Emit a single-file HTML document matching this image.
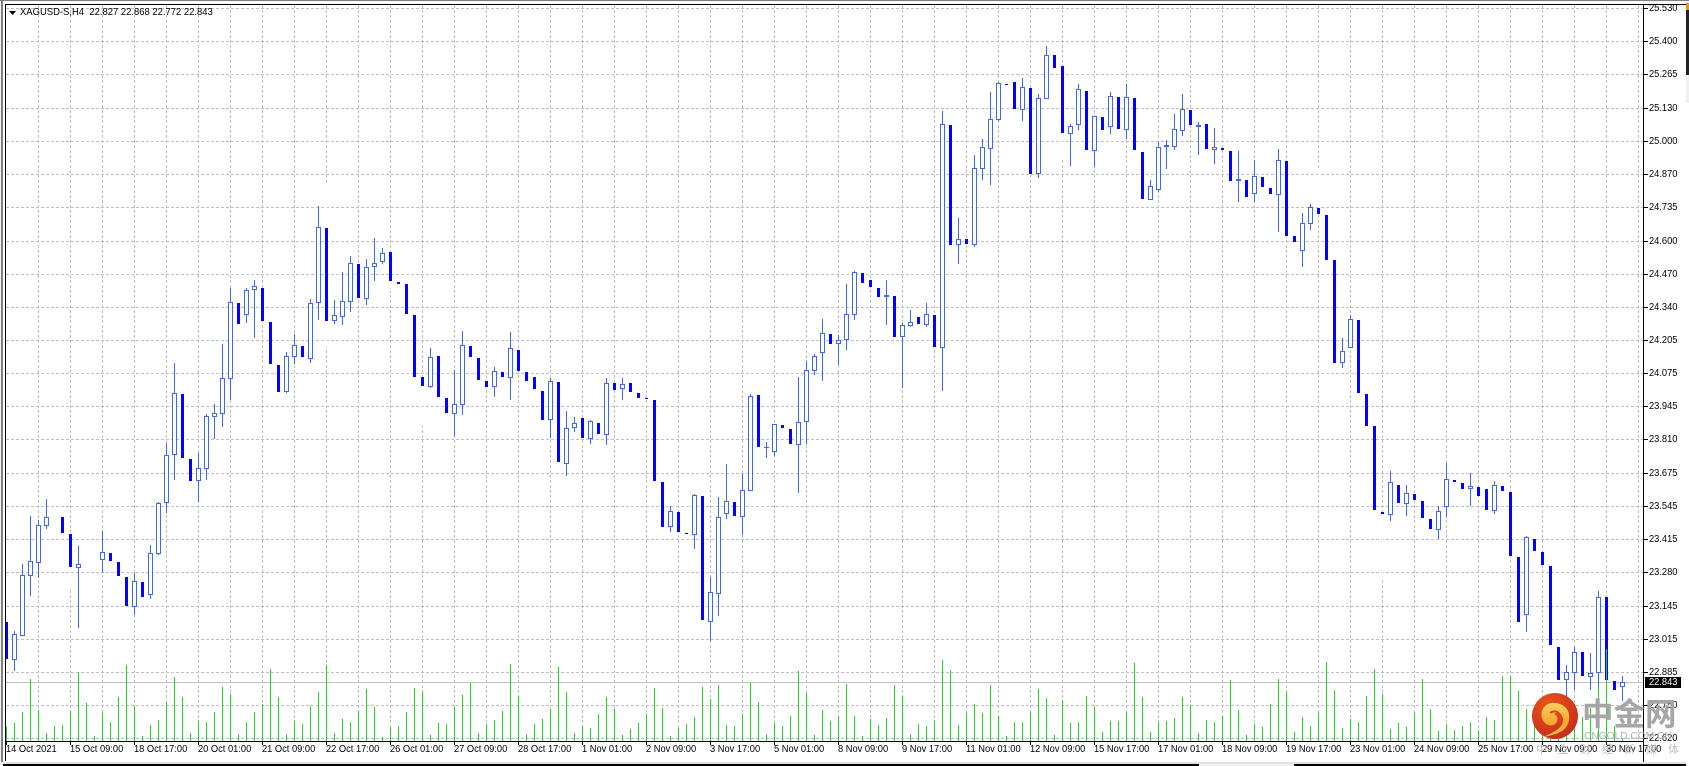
<!DOCTYPE html>
<html><head><meta charset="utf-8"><title>XAGUSD-S,H4</title>
<style>
html,body{margin:0;padding:0;background:#f0f0f0}
#w{position:relative;width:1689px;height:766px;overflow:hidden;background:#f0f0f0;font-family:"Liberation Sans",sans-serif;color:#000}
svg{position:absolute;left:0;top:0}
.d,.p,.h{position:absolute;font-size:10px;line-height:10px;white-space:pre;transform:scaleX(.93);transform-origin:0 0}
.d{top:745px}
.p{left:1649px}
.h{left:20px;top:8px;transform:scaleX(.945)}
</style></head><body><div id="w">
<svg width="1689" height="766" viewBox="0 0 1689 766" shape-rendering="crispEdges">
<defs><clipPath id="c"><rect x="6" y="5" width="1637" height="736"/></clipPath></defs>
<rect x="0" y="0" width="1689" height="1" fill="#808080"/>
<rect x="1" y="0" width="2" height="762" fill="#808080"/>
<rect x="3" y="1" width="1683" height="761" fill="#fff"/>
<rect x="3" y="762" width="1683" height="2" fill="#e0e0e0"/>
<rect x="3" y="764" width="1196" height="2" fill="#000"/>
<rect x="1294" y="764" width="395" height="2" fill="#000"/>
<rect x="1686" y="3" width="3" height="72" fill="#222"/>
<rect x="1686" y="3" width="3" height="7" fill="#d99a2b"/>
<rect x="1686" y="103" width="3" height="663" fill="#fff"/>
<rect x="5" y="4" width="1681" height="1" fill="#000"/>
<rect x="5" y="4" width="1" height="757" fill="#000"/>
<path fill="none" stroke="#c0c0c0" stroke-dasharray="3 2" d="M6 8.5H1643M6 41.5H1643M6 74.5H1643M6 108.5H1643M6 141.5H1643M6 174.5H1643M6 207.5H1643M6 241.5H1643M6 274.5H1643M6 307.5H1643M6 340.5H1643M6 373.5H1643M6 406.5H1643M6 439.5H1643M6 473.5H1643M6 506.5H1643M6 539.5H1643M6 572.5H1643M6 606.5H1643M6 639.5H1643M6 672.5H1643M6 705.5H1643M6 738.5H1643M38.5 5V741M70.5 5V741M102.5 5V741M134.5 5V741M166.5 5V741M198.5 5V741M230.5 5V741M262.5 5V741M294.5 5V741M326.5 5V741M358.5 5V741M390.5 5V741M422.5 5V741M454.5 5V741M486.5 5V741M518.5 5V741M550.5 5V741M582.5 5V741M614.5 5V741M646.5 5V741M678.5 5V741M710.5 5V741M742.5 5V741M774.5 5V741M806.5 5V741M838.5 5V741M870.5 5V741M902.5 5V741M934.5 5V741M966.5 5V741M998.5 5V741M1030.5 5V741M1062.5 5V741M1094.5 5V741M1126.5 5V741M1158.5 5V741M1190.5 5V741M1222.5 5V741M1254.5 5V741M1286.5 5V741M1318.5 5V741M1350.5 5V741M1382.5 5V741M1414.5 5V741M1446.5 5V741M1478.5 5V741M1510.5 5V741M1542.5 5V741M1574.5 5V741M1606.5 5V741M1638.5 5V741"/>
<path fill="none" stroke="#fff" d="M326.5 185V228M326.5 321V347M1062.5 133V160M1318.5 169V208M1382.5 514V579M70.5 567V588M422.5 386V426M390.5 281V291"/>
<rect x="6" y="682" width="1637" height="1" fill="#c0c0c0"/>
<g clip-path="url(#c)">
<path fill="none" stroke="#4169e1" d="M14.5 631V671M22.5 564V636M30.5 516V596M38.5 520V578M46.5 499V529M78.5 546V628M102.5 531V573M134.5 573V615M150.5 545V599M158.5 502V555M166.5 443V513M174.5 363V480M198.5 453V502M206.5 414V480M214.5 404V439M222.5 344V427M230.5 288V400M246.5 288V323M254.5 280V338M286.5 352V393M294.5 334V364M310.5 299V363M318.5 206V320M334.5 300V324M342.5 272V325M350.5 256V312M366.5 259V305M374.5 238V281M382.5 248V264M430.5 348V388M454.5 370V436M462.5 331V415M494.5 367V397M510.5 332V400M550.5 378V438M566.5 411V476M574.5 417V432M590.5 420V444M606.5 378V445M622.5 378V400M670.5 506V532M694.5 494V549M710.5 577V641M718.5 497V616M726.5 464V519M742.5 474V535M750.5 394V491M766.5 442V458M764 447.5H769M774.5 424V456M798.5 377V493M806.5 361V444M814.5 354V375M822.5 319V381M838.5 335V365M846.5 284V350M854.5 271V320M886.5 280V325M902.5 323V388M910.5 310V327M926.5 303V327M942.5 111V391M958.5 218V264M974.5 155V247M982.5 139V180M990.5 92V185M998.5 82V121M1022.5 78V121M1038.5 94V178M1046.5 46V99M1070.5 124V166M1078.5 84V130M1094.5 116V167M1110.5 92V134M1126.5 84V139M1150.5 180V200M1158.5 142V192M1166.5 140V169M1174.5 114V150M1182.5 94V136M1198.5 122V155M1214.5 128V164M1238.5 151V202M1254.5 160V202M1278.5 149V232M1302.5 213V267M1310.5 204V230M1342.5 338V368M1350.5 315V348M1390.5 471V521M1406.5 485V516M1438.5 506V539M1446.5 463V517M1470.5 473V506M1494.5 481V514M1526.5 536V632M1566.5 665V698M1574.5 647V690M1590.5 653V690M1598.5 591V698M1622.5 676V701"/>
<path fill="#fff" stroke="#4169e1" d="M12.5 634.5h4V659.5h-4zM20.5 575.5h4V635.5h-4zM28.5 561.5h4V575.5h-4zM36.5 525.5h4V562.5h-4zM44.5 517.5h4V525.5h-4zM76.5 564.5h4V567.5h-4zM100.5 552.5h4V559.5h-4zM132.5 581.5h4V606.5h-4zM148.5 553.5h4V594.5h-4zM156.5 503.5h4V553.5h-4zM164.5 455.5h4V502.5h-4zM172.5 393.5h4V454.5h-4zM196.5 468.5h4V480.5h-4zM204.5 416.5h4V468.5h-4zM212.5 413.5h4V416.5h-4zM220.5 378.5h4V413.5h-4zM228.5 302.5h4V378.5h-4zM244.5 290.5h4V314.5h-4zM252.5 286.5h4V289.5h-4zM284.5 356.5h4V391.5h-4zM292.5 345.5h4V356.5h-4zM308.5 303.5h4V358.5h-4zM316.5 227.5h4V302.5h-4zM332.5 315.5h4V320.5h-4zM340.5 301.5h4V316.5h-4zM348.5 263.5h4V301.5h-4zM364.5 267.5h4V298.5h-4zM372.5 263.5h4V266.5h-4zM380.5 253.5h4V261.5h-4zM428.5 357.5h4V386.5h-4zM452.5 404.5h4V413.5h-4zM460.5 345.5h4V404.5h-4zM492.5 371.5h4V386.5h-4zM508.5 348.5h4V377.5h-4zM548.5 381.5h4V419.5h-4zM564.5 428.5h4V463.5h-4zM572.5 423.5h4V427.5h-4zM588.5 421.5h4V438.5h-4zM604.5 383.5h4V434.5h-4zM620.5 384.5h4V388.5h-4zM668.5 511.5h4V526.5h-4zM692.5 495.5h4V534.5h-4zM708.5 592.5h4V621.5h-4zM716.5 517.5h4V593.5h-4zM724.5 501.5h4V513.5h-4zM740.5 490.5h4V516.5h-4zM748.5 396.5h4V490.5h-4zM772.5 424.5h4V451.5h-4zM796.5 422.5h4V444.5h-4zM804.5 370.5h4V421.5h-4zM812.5 356.5h4V370.5h-4zM820.5 333.5h4V352.5h-4zM836.5 340.5h4V343.5h-4zM844.5 314.5h4V339.5h-4zM852.5 272.5h4V314.5h-4zM884.5 295.5h4V296.5h-4zM900.5 325.5h4V336.5h-4zM908.5 322.5h4V325.5h-4zM924.5 314.5h4V324.5h-4zM940.5 124.5h4V347.5h-4zM956.5 239.5h4V244.5h-4zM972.5 168.5h4V244.5h-4zM980.5 147.5h4V168.5h-4zM988.5 119.5h4V148.5h-4zM996.5 83.5h4V119.5h-4zM1020.5 87.5h4V109.5h-4zM1036.5 98.5h4V173.5h-4zM1044.5 55.5h4V98.5h-4zM1068.5 126.5h4V133.5h-4zM1076.5 89.5h4V124.5h-4zM1092.5 116.5h4V150.5h-4zM1108.5 96.5h4V126.5h-4zM1124.5 97.5h4V129.5h-4zM1148.5 186.5h4V199.5h-4zM1156.5 147.5h4V189.5h-4zM1164.5 145.5h4V146.5h-4zM1172.5 129.5h4V146.5h-4zM1180.5 109.5h4V130.5h-4zM1196.5 125.5h4V126.5h-4zM1212.5 147.5h4V149.5h-4zM1236.5 179.5h4V180.5h-4zM1252.5 176.5h4V193.5h-4zM1276.5 160.5h4V194.5h-4zM1300.5 223.5h4V250.5h-4zM1308.5 207.5h4V223.5h-4zM1340.5 351.5h4V362.5h-4zM1348.5 319.5h4V347.5h-4zM1388.5 482.5h4V514.5h-4zM1404.5 493.5h4V503.5h-4zM1436.5 511.5h4V529.5h-4zM1444.5 479.5h4V506.5h-4zM1468.5 486.5h4V488.5h-4zM1492.5 485.5h4V510.5h-4zM1524.5 537.5h4V614.5h-4zM1564.5 672.5h4V679.5h-4zM1572.5 652.5h4V672.5h-4zM1588.5 673.5h4V676.5h-4zM1596.5 597.5h4V672.5h-4zM1620.5 682.5h4V686.5h-4z"/>
<path fill="none" stroke="#0000ff" stroke-width="3" d="M6.5 622V659M62.5 517V533M70.5 534V567M110.5 553V561M118.5 562V576M126.5 577V606M142.5 582V597M182.5 394V458M190.5 459V481M238.5 303V324M262.5 288V321M270.5 322V364M278.5 365V392M302.5 346V357M326.5 228V321M358.5 264V298M390.5 252V281M398.5 282V284M406.5 284V314M414.5 315V377M422.5 377V386M438.5 356V397M446.5 398V413M470.5 346V357M478.5 358V380M486.5 381V387M502.5 372V377M518.5 350V371M526.5 372V381M534.5 377V389M542.5 391V420M558.5 382V462M582.5 418V438M598.5 423V434M614.5 383V390M630.5 383V392M638.5 393V398M646.5 398V399M654.5 400V481M662.5 482V527M678.5 512V532M686.5 533V534M702.5 496V620M734.5 502V516M758.5 395V447M782.5 425V428M790.5 429V444M830.5 334V344M862.5 273V283M870.5 280V287M878.5 288V297M894.5 296V337M918.5 317V324M934.5 315V347M950.5 125V245M966.5 239V244M1006.5 84V85M1014.5 82V109M1030.5 88V174M1054.5 55V68M1062.5 66V133M1086.5 91V150M1102.5 117V130M1118.5 97V129M1134.5 98V150M1142.5 152V199M1190.5 110V125M1206.5 124V149M1222.5 148V150M1230.5 151V181M1246.5 180V197M1262.5 177V187M1270.5 188V194M1286.5 161V236M1294.5 236V242M1318.5 208V214M1326.5 215V260M1334.5 260V363M1358.5 320V393M1366.5 394V426M1374.5 426V510M1382.5 512V514M1398.5 485V503M1414.5 494V500M1422.5 501V518M1430.5 519V529M1454.5 480V482M1462.5 483V489M1478.5 487V496M1486.5 489V510M1502.5 486V491M1510.5 492V556M1518.5 557V622M1534.5 539V551M1542.5 552V565M1550.5 566V645M1558.5 647V680M1582.5 652V676M1606.5 597V680M1614.5 681V690"/>
<path fill="none" stroke="#32cd32" d="M6.5 727V741M14.5 723V741M22.5 712V741M30.5 679V741M38.5 710V741M46.5 733V741M54.5 726V741M62.5 725V741M70.5 711V741M78.5 672V741M86.5 703V741M94.5 736V741M102.5 713V741M110.5 722V741M118.5 697V741M126.5 665V741M134.5 706V741M142.5 736V741M150.5 725V741M158.5 720V741M166.5 702V741M174.5 677V741M182.5 697V741M190.5 733V741M198.5 721V741M206.5 722V741M214.5 712V741M222.5 687V741M230.5 694V741M238.5 734V741M246.5 722V741M254.5 712V741M262.5 704V741M270.5 669V741M278.5 697V741M286.5 734V741M294.5 721V741M302.5 724V741M310.5 706V741M318.5 692V741M326.5 665V741M334.5 733V741M342.5 719V741M350.5 722V741M358.5 711V741M366.5 689V741M374.5 707V741M382.5 737V741M390.5 727V741M398.5 726V741M406.5 712V741M414.5 688V741M422.5 692V741M430.5 735V741M438.5 723V741M446.5 724V741M454.5 707V741M462.5 695V741M470.5 683V741M478.5 733V741M486.5 724V741M494.5 720V741M502.5 711V741M510.5 664V741M518.5 696V741M526.5 734V741M534.5 724V741M542.5 719V741M550.5 709V741M558.5 667V741M566.5 692V741M574.5 733V741M582.5 726V741M590.5 728V741M598.5 714V741M606.5 697V741M614.5 709V741M622.5 735V741M630.5 729V741M638.5 723V741M646.5 714V741M654.5 688V741M662.5 708V741M670.5 736V741M678.5 728V741M686.5 724V741M694.5 717V741M702.5 687V741M710.5 699V741M718.5 685V741M726.5 725V741M734.5 726V741M742.5 714V741M750.5 683V741M758.5 702V741M766.5 734V741M774.5 723V741M782.5 726V741M790.5 716V741M798.5 671V741M806.5 693V741M814.5 735V741M822.5 710V741M830.5 721V741M838.5 717V741M846.5 684V741M854.5 716V741M862.5 736V741M870.5 719V741M878.5 725V741M886.5 718V741M894.5 685V741M902.5 696V741M910.5 734V741M918.5 724V741M926.5 726V741M934.5 721V741M942.5 660V741M950.5 670V741M958.5 725V741M966.5 713V741M974.5 704V741M982.5 713V741M990.5 685V741M998.5 716V741M1006.5 736V741M1014.5 722V741M1022.5 722V741M1030.5 712V741M1038.5 689V741M1046.5 698V741M1054.5 735V741M1062.5 700V741M1070.5 723V741M1078.5 722V741M1086.5 696V741M1094.5 707V741M1102.5 732V741M1110.5 721V741M1118.5 721V741M1126.5 712V741M1134.5 663V741M1142.5 697V741M1150.5 732V741M1158.5 722V741M1166.5 721V741M1174.5 718V741M1182.5 697V741M1190.5 705V741M1198.5 733V741M1206.5 720V741M1214.5 722V741M1222.5 716V741M1230.5 680V741M1238.5 710V741M1246.5 735V741M1254.5 724V741M1262.5 727V741M1270.5 704V741M1278.5 679V741M1286.5 692V741M1294.5 732V741M1302.5 717V741M1310.5 726V741M1318.5 713V741M1326.5 662V741M1334.5 690V741M1342.5 728V741M1350.5 719V741M1358.5 722V741M1366.5 696V741M1374.5 669V741M1382.5 694V741M1390.5 729V741M1398.5 723V741M1406.5 727V741M1414.5 713V741M1422.5 679V741M1430.5 709V741M1438.5 731V741M1446.5 724V741M1454.5 730V741M1462.5 726V741M1470.5 722V741M1478.5 730V741M1486.5 717V741M1494.5 720V741M1502.5 676V741M1510.5 676V741M1518.5 691V741M1526.5 709V741M1534.5 725V741M1542.5 715V741M1550.5 720V741M1558.5 722V741M1566.5 720V741M1574.5 705V741M1582.5 717V741M1590.5 708V741M1598.5 688V741M1606.5 649V741M1614.5 726V741M1622.5 738V741"/>
</g>
<rect x="1643" y="4" width="1" height="758" fill="#000"/>
<rect x="6" y="741" width="1638" height="1" fill="#000"/>
<path fill="none" stroke="#000" d="M1644 8.5h4M1644 41.5h4M1644 74.5h4M1644 108.5h4M1644 141.5h4M1644 174.5h4M1644 207.5h4M1644 241.5h4M1644 274.5h4M1644 307.5h4M1644 340.5h4M1644 373.5h4M1644 406.5h4M1644 439.5h4M1644 473.5h4M1644 506.5h4M1644 539.5h4M1644 572.5h4M1644 606.5h4M1644 639.5h4M1644 672.5h4M1644 705.5h4M1644 738.5h4M6.5 741v4M70.5 741v4M134.5 741v4M198.5 741v4M262.5 741v4M326.5 741v4M390.5 741v4M454.5 741v4M518.5 741v4M582.5 741v4M646.5 741v4M710.5 741v4M774.5 741v4M838.5 741v4M902.5 741v4M966.5 741v4M1030.5 741v4M1094.5 741v4M1158.5 741v4M1222.5 741v4M1286.5 741v4M1350.5 741v4M1414.5 741v4M1478.5 741v4M1542.5 741v4M1606.5 741v4"/>
<path d="M9 11H16L12.5 15Z" fill="#000" shape-rendering="auto"/>
<rect x="1645" y="677" width="36" height="11" fill="#000"/>
</svg>
<div class="h">XAGUSD-S,H4  22.827 22.868 22.772 22.843</div>
<div class="p" style="top:4px">25.530</div>
<div class="p" style="top:37px">25.400</div>
<div class="p" style="top:70px">25.265</div>
<div class="p" style="top:104px">25.130</div>
<div class="p" style="top:137px">25.000</div>
<div class="p" style="top:170px">24.870</div>
<div class="p" style="top:203px">24.735</div>
<div class="p" style="top:237px">24.600</div>
<div class="p" style="top:270px">24.470</div>
<div class="p" style="top:303px">24.340</div>
<div class="p" style="top:336px">24.205</div>
<div class="p" style="top:369px">24.075</div>
<div class="p" style="top:402px">23.945</div>
<div class="p" style="top:435px">23.810</div>
<div class="p" style="top:469px">23.675</div>
<div class="p" style="top:502px">23.545</div>
<div class="p" style="top:535px">23.415</div>
<div class="p" style="top:568px">23.280</div>
<div class="p" style="top:602px">23.145</div>
<div class="p" style="top:635px">23.015</div>
<div class="p" style="top:668px">22.885</div>
<div class="p" style="top:678px;color:#fff">22.843</div>
<div class="p" style="top:701px">22.750</div>
<div class="p" style="top:734px">22.620</div>
<div class="d" style="left:6px">14 Oct 2021</div>
<div class="d" style="left:70px">15 Oct 09:00</div>
<div class="d" style="left:134px">18 Oct 17:00</div>
<div class="d" style="left:198px">20 Oct 01:00</div>
<div class="d" style="left:262px">21 Oct 09:00</div>
<div class="d" style="left:326px">22 Oct 17:00</div>
<div class="d" style="left:390px">26 Oct 01:00</div>
<div class="d" style="left:454px">27 Oct 09:00</div>
<div class="d" style="left:518px">28 Oct 17:00</div>
<div class="d" style="left:582px">1 Nov 01:00</div>
<div class="d" style="left:646px">2 Nov 09:00</div>
<div class="d" style="left:710px">3 Nov 17:00</div>
<div class="d" style="left:774px">5 Nov 01:00</div>
<div class="d" style="left:838px">8 Nov 09:00</div>
<div class="d" style="left:902px">9 Nov 17:00</div>
<div class="d" style="left:966px">11 Nov 01:00</div>
<div class="d" style="left:1030px">12 Nov 09:00</div>
<div class="d" style="left:1094px">15 Nov 17:00</div>
<div class="d" style="left:1158px">17 Nov 01:00</div>
<div class="d" style="left:1222px">18 Nov 09:00</div>
<div class="d" style="left:1286px">19 Nov 17:00</div>
<div class="d" style="left:1350px">23 Nov 01:00</div>
<div class="d" style="left:1414px">24 Nov 09:00</div>
<div class="d" style="left:1478px">25 Nov 17:00</div>
<div class="d" style="left:1542px">29 Nov 09:00</div>
<div class="d" style="left:1606px">30 Nov 17:00</div>
<svg width="1689" height="766" viewBox="0 0 1689 766">
<defs>
<radialGradient id="r" cx=".35" cy=".25" r=".85"><stop offset="0" stop-color="#e8541a"/><stop offset="1" stop-color="#c42a1c"/></radialGradient>
<linearGradient id="g" x1="0" y1="0" x2="0" y2="1"><stop offset="0" stop-color="#fbd063"/><stop offset=".6" stop-color="#f7a52d"/><stop offset="1" stop-color="#f0c048"/></linearGradient>
</defs>
<circle cx="1555" cy="716" r="23" fill="url(#r)"/>
<path fill="url(#g)" d="M1543 737C1553 735 1567 733 1569 720C1571 708 1561 702 1552 703C1544 704 1540 711 1542 718C1544 725 1551 727 1555 724C1559 721 1558 715 1554 714C1558 711 1564 715 1563 721C1562 729 1552 733 1543 737Z"/>
<path fill="none" stroke="#d8481c" stroke-width="2" d="M1550 713C1555 709 1562 713 1561 720"/>
<text x="1582" y="725" font-family="'Noto Sans CJK SC',sans-serif" font-weight="700" font-size="31.5" fill="#a6a6a6">中金网</text>
<text x="1584" y="739" font-family="'Liberation Sans',sans-serif" font-size="10.2" fill="#b0b0b0">CNGOLD.COM.CN</text>
<text x="1536" y="753" font-family="'Noto Sans CJK SC',sans-serif" font-size="11" letter-spacing="11" fill="#bcbcbc">中立财经新媒体</text>
</svg>
</div></body></html>
